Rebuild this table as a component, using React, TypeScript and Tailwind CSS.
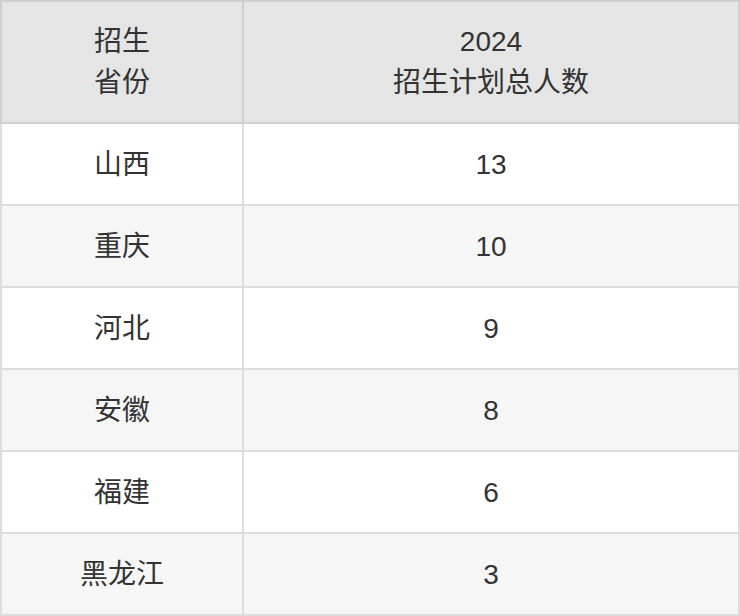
const rows: [string, string][] = [
  ["山西", "13"],
  ["重庆", "10"],
  ["河北", "9"],
  ["安徽", "8"],
  ["福建", "6"],
  ["黑龙江", "3"],
];

const font = {
  fontFamily: '"Liberation Sans", "Noto Sans CJK SC", sans-serif',
};

export default function App() {
  return (
    <div className="w-[740px] h-[616px] bg-white overflow-hidden" style={font}>
      <table className="w-[740px] border-collapse table-fixed text-[28px] leading-[41px] text-[#333]">
        <colgroup>
          <col className="w-[242px]" />
          <col />
        </colgroup>
        <thead>
          <tr className="h-[122px] bg-[#e5e5e5]">
            <th className="border-2 border-[#cfcfcf] font-normal text-center align-middle">
              招生
              <br />
              省份
            </th>
            <th className="border-2 border-[#cfcfcf] font-normal text-center align-middle">
              2024
              <br />
              招生计划总人数
            </th>
          </tr>
        </thead>
        <tbody>
          {rows.map(([province, total], i) => (
            <tr key={province} className={`h-[82px] ${i % 2 === 1 ? "bg-[#f6f6f6]" : "bg-white"}`}>
              <td className="border-2 border-[#dddddd] text-center align-middle">{province}</td>
              <td className="border-2 border-[#dddddd] text-center align-middle">{total}</td>
            </tr>
          ))}
        </tbody>
      </table>
    </div>
  );
}
